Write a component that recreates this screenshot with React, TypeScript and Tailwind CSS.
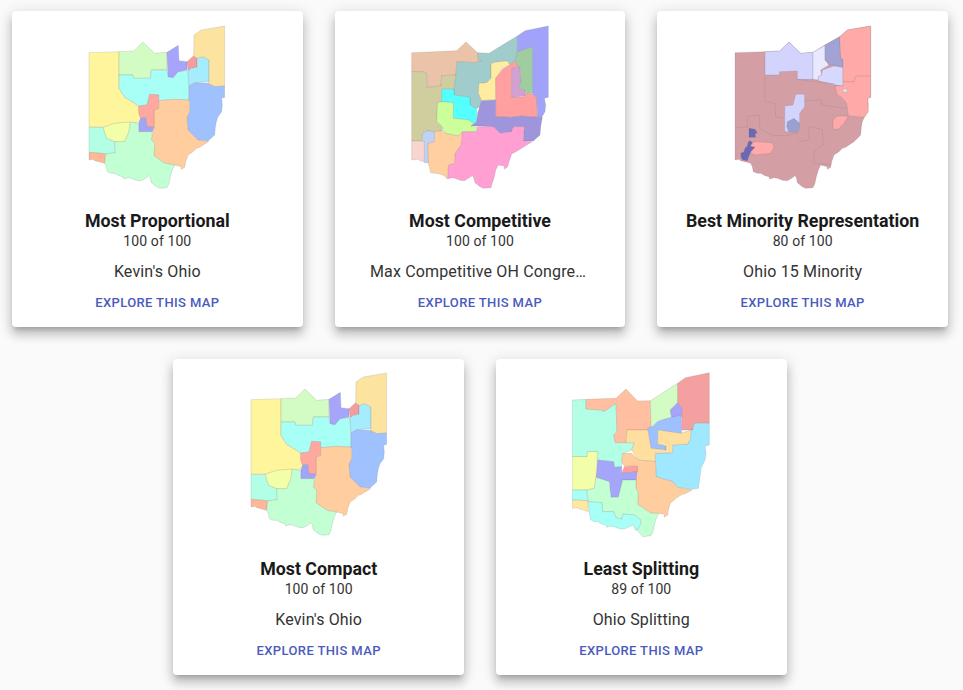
type Region = [fill: string, points: string];

// traced by hand from the reference, coordinates are 3x pixels
const balanced: Region[] = [
  ["#fff59d", "88,128 178,125 178,235 195,262 225,280 237,290 243,330 230,338 165,340 130,352 88,352"],
  ["#d3fbc4", "178,125 222,123 250,96 285,130 322,127 322,180 275,180 272,205 222,205 220,195 178,195"],
  ["#a8fff5", "178,195 220,195 222,205 272,205 275,180 322,180 325,200 340,203 355,185 385,182 388,270 345,268 297,272 297,255 270,253 262,285 237,288 225,280 195,262 178,235"],
  ["#a7a5fb", "322,127 356,106 358,152 382,155 382,180 355,185 340,203 325,200"],
  ["#f59c9f", "382,155 402,137 412,145 412,172 395,175 385,182"],
  ["#a5ecff", "412,145 430,140 448,150 448,215 405,218 388,228 385,182 395,175 412,172"],
  ["#fde3a0", "403,75 425,60 495,48 495,228 465,230 445,220 448,215 448,150 430,140 412,145 402,137"],
  ["#9fc2ff", "388,228 405,218 445,220 465,230 495,228 495,262 486,265 488,285 486,305 475,320 470,335 467,352 465,375 445,393 415,390 385,360 382,322 390,305 390,275 388,270"],
  ["#ffcd9e", "297,272 345,268 388,270 390,305 382,322 385,360 415,390 447,395 430,405 420,412 410,415 400,425 385,435 378,455 375,472 365,478 365,470 345,465 315,460 283,437 285,400 275,390 283,355 283,300 297,295"],
  ["#ffa8a0", "237,288 262,285 270,253 297,255 297,295 283,300 283,352 262,350 258,322 243,325 237,310"],
  ["#a0a5f8", "243,325 258,322 262,350 283,352 278,365 237,365 237,340"],
  ["#f3ffa8", "130,352 165,340 212,336 208,365 195,395 165,395 140,385"],
  ["#b2ffe6", "88,352 130,352 140,385 165,395 167,428 138,432 125,430 88,427"],
  ["#ffb798", "88,427 125,430 138,432 135,460 118,455 105,452 100,448 88,450"],
  ["#c2ffd3", "212,336 237,340 237,365 278,365 275,390 285,400 283,437 315,460 345,465 338,480 332,500 328,520 322,533 300,535 290,530 275,518 272,503 268,497 258,505 245,512 230,511 215,505 205,503 192,507 190,500 178,497 165,490 155,490 143,485 140,470 135,460 138,432 167,428 165,395 195,395 208,365"],
];

const competitive: Region[] = [
  ["#eac3a8", "80,128 215,122 243,96 278,128 280,150 290,152 270,158 215,155 213,195 170,197 168,228 125,232 125,190 113,185 80,185"],
  ["#d0cd9f", "80,185 113,185 125,190 125,232 168,228 170,197 213,195 207,238 170,238 170,275 158,278 155,335 172,350 172,362 148,365 125,362 112,372 112,393 80,393"],
  ["#a0cdcb", "215,155 270,158 290,152 280,150 278,128 312,130 397,78 397,125 390,153 375,165 368,153 340,155 318,160 318,205 305,218 282,220 280,250 290,255 288,290 270,297 255,285 255,262 207,255 207,238 213,195"],
  ["#55ffff", "170,238 207,238 207,255 255,262 255,285 275,297 275,335 265,340 252,330 205,325 205,278 170,275"],
  ["#ccff9b", "158,278 170,275 205,278 205,325 252,330 268,345 258,350 275,350 275,365 232,365 220,378 180,370 172,350 155,335"],
  ["#ffec9f", "318,160 340,155 368,153 375,165 350,175 345,185 338,198 332,205 335,268 290,272 280,250 282,220 305,218 318,205"],
  ["#ff9f9f", "332,205 345,188 352,178 375,165 390,153 400,170 380,175 380,262 418,260 422,250 445,252 456,265 456,295 458,322 410,318 380,322 332,320"],
  ["#d3a0d4", "380,175 405,170 408,215 400,235 420,240 420,258 380,262"],
  ["#a0cda0", "390,153 397,125 443,110 443,250 422,250 420,240 400,235 408,215 405,170 400,170"],
  ["#a1a3fb", "397,78 420,62 490,48 490,262 478,265 482,285 480,305 470,322 458,322 456,265 445,252 443,250 443,110 397,125"],
  ["#9f95dc", "290,272 332,270 332,320 380,322 410,318 458,322 472,322 467,350 465,375 445,393 415,393 418,350 385,350 380,365 345,370 325,350 258,347 275,335 278,310"],
  ["#ff9fd2", "232,365 275,365 278,350 325,350 345,370 380,365 385,350 418,350 415,393 442,395 425,405 410,415 398,422 380,432 372,455 368,470 358,478 358,468 340,465 332,480 328,500 320,525 318,533 295,535 285,530 270,518 266,503 262,497 250,505 238,512 225,511 210,505 200,503 188,507 190,465 208,460 210,430 228,405"],
  ["#ffcf9f", "148,365 172,362 180,370 220,378 232,365 228,405 210,430 208,460 190,465 187,507 178,497 165,492 150,490 137,488 133,470 130,463 128,400 148,395"],
  ["#bdd2f5", "112,372 125,362 148,365 148,395 128,400 130,458 118,458 118,395 112,393"],
  ["#f8d5ce", "80,393 118,395 118,455 105,452 100,448 80,450"],
];

const minority: Region[] = [
  ["#d49ea5", "88,128 178,125 222,123 250,96 285,130 322,127 356,106 402,80 425,60 495,48 495,262 486,265 488,285 486,305 476,322 470,335 467,352 465,375 445,395 430,405 420,412 410,415 400,425 385,435 378,455 375,472 365,478 365,470 345,465 338,480 332,500 328,520 322,533 300,535 290,530 275,518 272,503 268,497 258,505 245,512 230,511 215,505 205,503 192,507 190,500 178,497 165,490 155,490 143,485 140,470 135,460 118,455 105,452 100,448 88,450"],
  ["#d3d4fe", "178,125 222,123 250,96 285,130 322,127 322,208 275,208 275,183 222,185 220,195 178,195"],
  ["#e9e9fe", "322,127 358,106 358,150 370,165 345,180 348,195 338,200 338,210 322,208"],
  ["#d7d8fe", "338,200 348,195 350,180 385,168 412,172 412,228 390,225 338,212"],
  ["#a1a3d4", "358,106 402,80 405,145 412,148 412,172 385,165 370,165 368,155 358,150"],
  ["#ffa9a9", "402,80 425,60 495,48 495,262 486,265 488,305 476,322 428,318 423,280 408,262 395,255 388,228 412,228 412,148 405,145"],
  ["#e4dfee", "410,240 420,235 427,245 412,247"],
  ["#ffa9a9", "382,330 395,318 428,318 415,340 398,358 382,358"],
  ["#d3d4fe", "237,288 262,285 270,253 297,253 297,290 282,310 282,340 278,365 237,365"],
  ["#9ba0d2", "245,335 265,325 282,340 278,365 250,365 243,350"],
  ["#ffa9a9", "135,400 150,395 200,398 205,412 195,430 150,435 135,430"],
  ["#6a69b5", "130,355 148,358 155,368 148,372 150,382 130,382"],
  ["#6a69b5", "128,395 135,392 140,400 133,408 148,412 135,425 130,438 125,452 112,450 107,445 105,430 115,425 118,415 125,408"],
];

const minorityLines = [
  "178,195 178,275 208,280 210,320 237,325",
  "125,318 162,316 162,355 198,375 237,378 278,368",
  "88,352 125,352 125,318",
  "297,272 345,270 350,285 385,290 425,295",
  "278,395 310,390 310,350 350,358 352,405 325,425 325,462 375,462",
  "275,208 388,222",
  "413,215 445,215 450,198 495,198",
];

const splitting: Region[] = [
  ["#b2ffe6", "84,120 125,118 125,147 172,150 178,155 215,130 218,215 208,225 213,248 270,248 262,270 235,280 232,320 210,322 208,305 160,300 160,275 130,275 128,290 84,290"],
  ["#ffbfa0", "125,118 215,115 245,87 280,123 318,122 320,210 248,210 245,248 213,248 208,225 218,215 215,130 178,155 172,150 125,147"],
  ["#d3fbc4", "318,122 400,70 400,128 378,150 382,172 360,178 340,185 325,200 320,200"],
  ["#f4a0a0", "400,70 423,53 495,38 495,190 450,190 445,210 412,210 412,145 400,128"],
  ["#a5a3fb", "400,128 412,145 412,170 382,172 378,150"],
  ["#9fc0ff", "382,172 410,165 412,218 410,222 340,210 340,252 365,258 365,270 320,265 310,203 325,200 340,185 360,178"],
  ["#a0e8ff", "450,190 495,190 495,255 482,258 485,280 482,300 470,325 467,350 462,385 443,388 400,382 385,365 335,350 333,280 385,278 385,255 430,252 438,238 440,210 445,210"],
  ["#ffdf9f", "248,210 310,210 320,265 365,270 365,258 340,252 342,210 410,220 440,210 438,238 430,252 385,255 385,278 333,280 333,305 282,300 262,270 270,248 245,248"],
  ["#ffcd9e", "235,280 262,280 282,300 333,305 335,350 385,365 400,382 443,390 425,400 410,405 395,415 378,430 372,450 370,465 360,472 360,462 343,460 320,460 280,433 282,400 275,385 275,340 280,320 240,318 232,305"],
  ["#ffa09a", "240,320 280,318 280,335 232,340"],
  ["#a4a6fb", "160,300 208,305 210,322 232,320 232,340 278,335 275,360 235,360 222,412 200,412 195,365 155,352"],
  ["#f3ffa8", "84,290 128,290 130,275 160,275 155,352 150,385 128,390 84,390"],
  ["#a8fff5", "84,390 128,390 130,422 84,420"],
  ["#ffe9a0", "84,420 130,422 132,455 118,450 105,447 100,443 84,445"],
  ["#c2ffd3", "155,352 195,365 200,412 222,412 235,360 275,360 275,385 282,400 280,433 320,460 343,460 335,478 330,495 326,515 320,527 295,530 278,510 290,490 288,478 270,465 235,462 232,478 215,472 208,455 175,455 173,428 132,425 128,390 150,385"],
  ["#a8fff5", "132,425 173,428 175,455 208,455 215,472 232,478 235,462 270,465 288,478 290,490 278,510 272,510 268,495 255,500 240,507 225,506 210,500 198,498 187,502 185,495 172,492 160,485 150,485 140,480 136,465"],
];

function OhioMap({ regions, lines = [], x, y }: { regions: Region[]; lines?: string[]; x: number; y: number }) {
  return (
    <svg className="mx-auto block h-[190px] w-[190px] blur-[0.3px]" viewBox={`${x} ${y} 570 570`}>
      {regions.map(([fill, points], i) => (
        <polygon key={i} points={points} fill={fill} stroke="#66666655" strokeWidth={1.5} strokeLinejoin="round" />
      ))}
      {lines.map((points, i) => (
        <polyline key={i} points={points} fill="none" stroke="#b48c96" strokeWidth={1.5} />
      ))}
    </svg>
  );
}

const cards = [
  { title: "Most Proportional", score: "100 of 100", name: "Kevin's Ohio", regions: balanced, x: 7, y: 3 },
  { title: "Most Competitive", score: "100 of 100", name: "Max Competitive OH Congressional", regions: competitive, x: 0, y: 3 },
  { title: "Best Minority Representation", score: "80 of 100", name: "Ohio 15 Minority", regions: minority, lines: minorityLines, x: 7, y: 3 },
  { title: "Most Compact", score: "100 of 100", name: "Kevin's Ohio", regions: balanced, x: 7, y: 6 },
  { title: "Least Splitting", score: "89 of 100", name: "Ohio Splitting", regions: splitting, x: 5, y: -3 },
];

export default function App() {
  return (
    <div className="min-h-screen bg-[#fafafa] font-['Roboto',sans-serif]">
      <div className="flex w-[960px] flex-wrap justify-center gap-8 pt-[11px]">
        {cards.map((card) => (
          <div
            key={card.title}
            className="h-[316px] w-[290.67px] rounded bg-white text-center shadow-[0_5px_5px_-3px_rgba(0,0,0,0.2),0_8px_10px_1px_rgba(0,0,0,0.14),0_3px_14px_2px_rgba(0,0,0,0.12)]"
          >
            <OhioMap regions={card.regions} lines={card.lines} x={card.x} y={card.y} />
            <h2 className="mt-2 text-[17.8px] leading-6 font-bold text-[#1a1a1a]">{card.title}</h2>
            <p className="text-sm leading-4 tracking-[0.1px] text-[#333333]">{card.score}</p>
            <p className="mx-auto mt-[11px] w-[220px] truncate text-base leading-6 tracking-[0.15px] text-[#333333]">{card.name}</p>
            <button className="mt-[7px] text-[13px] leading-6 font-medium tracking-[0.38px] text-[#4b5bbd]">
              EXPLORE THIS MAP
            </button>
          </div>
        ))}
      </div>
    </div>
  );
}
